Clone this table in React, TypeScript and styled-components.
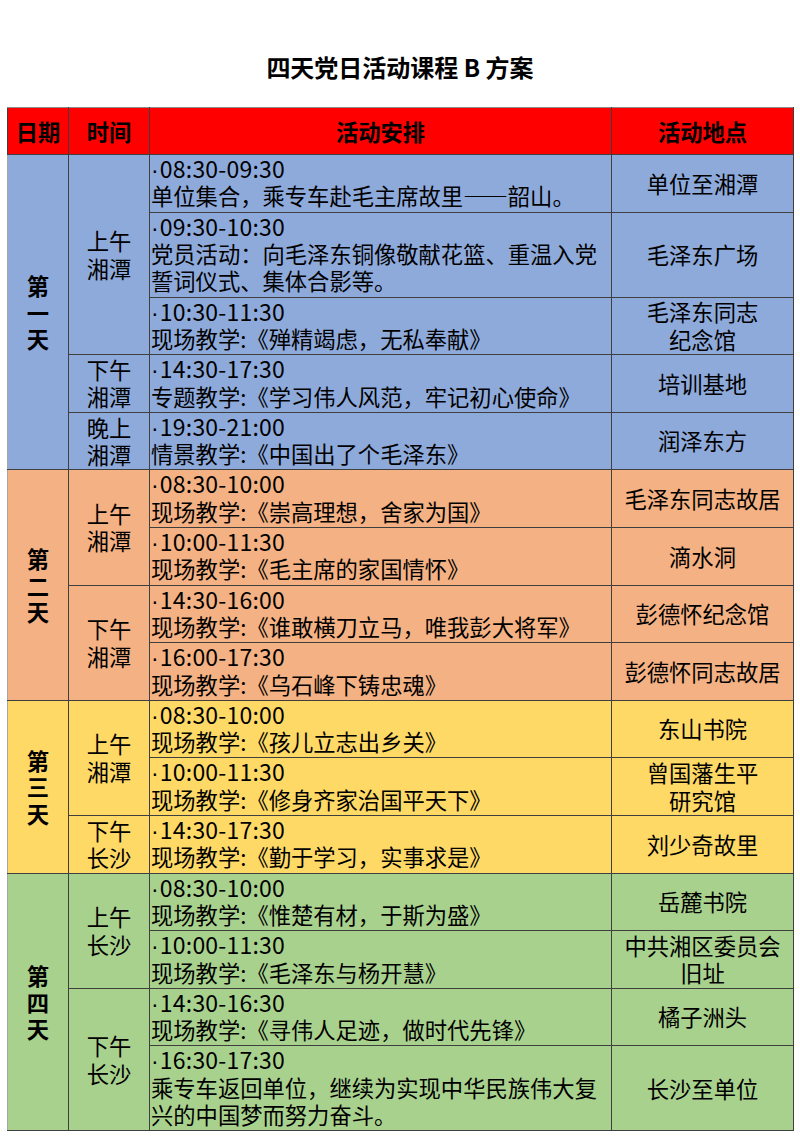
import React from 'react';
import styled, { createGlobalStyle } from 'styled-components';

const GlobalStyle = createGlobalStyle`
  body {
    margin: 0;
    background: #ffffff;
    font-family: "Noto Sans CJK SC", "Noto Sans", sans-serif;
    color: #000;
  }
`;

const Page = styled.div`
  width: 800px;
  padding: 0 7px;
  box-sizing: border-box;
`;

const Title = styled.h1`
  margin: 0 0 23px;
  padding-top: 50px;
  line-height: 34px;
  font-size: 24px;
  font-weight: 700;
  text-align: center;
`;

const Table = styled.table`
  width: 786px;
  table-layout: fixed;
  border-collapse: collapse;
  border-spacing: 0;
  font-size: 22.3px;
  border-left: 1px solid #a6a6a6;
  border-bottom: 1px solid #a6a6a6;
`;

const HeadRow = styled.tr`
  background-color: #ff0000;
  height: 47px;
`;

const HeadCell = styled.th`
  border: 1px solid #3f3f3f;
  border-top-color: #8c8c8c;
  font-weight: 700;
  text-align: center;
  padding: 0;
  line-height: 27px;
`;

const Row = styled.tr<{ $bg: string }>`
  background-color: ${(p) => p.$bg};
`;

const DayCell = styled.td`
  border: 1px solid #3f3f3f;
  border-left-color: #a6a6a6;
  font-weight: 700;
  text-align: center;
  vertical-align: middle;
  line-height: 26.5px;
  padding: 0;
`;

const TimeCell = styled.td`
  border: 1px solid #3f3f3f;
  text-align: center;
  vertical-align: middle;
  line-height: 27.4px;
  padding: 0;
`;

const ActivityCell = styled.td<{ $soft: boolean }>`
  border: 1px solid #3f3f3f;
  border-top-color: ${(p) => (p.$soft ? '#d6dbe6' : '#3f3f3f')};
  text-align: left;
  vertical-align: top;
  line-height: 27.4px;
  padding: 0 0 1.8px 1px;
  white-space: nowrap;
`;

const PlaceCell = styled.td<{ $soft: boolean }>`
  border: 1px solid #3f3f3f;
  border-top-color: ${(p) => (p.$soft ? '#d6dbe6' : '#3f3f3f')};
  text-align: center;
  vertical-align: middle;
  line-height: 27.4px;
  padding: 0;
  white-space: nowrap;
`;

const Line = styled.span`
  display: block;
`;

const TimeLine = styled.span`
  display: block;
  height: 27.4px;
  font-size: 23px;
  letter-spacing: 0.2px;
`;

const Dot = styled.span`
  font-family: "Liberation Sans", Arial, sans-serif;
  line-height: 1;
  margin-right: 1px;
`;

const Dash = styled.span`
  font-feature-settings: "fwid" 1;
`;

type Item = { time: string; lines: string[]; place: string[] };
type Slot = { label: string[]; items: Item[] };
type Day = { label: string[]; color: string; soft?: boolean; slots: Slot[] };

const days: Day[] = [
  {
    label: ['第', '一', '天'],
    color: '#8eaadb',
    soft: true,
    slots: [
      {
        label: ['上午', '湘潭'],
        items: [
          { time: '08:30-09:30', lines: ['单位集合，乘专车赴毛主席故里——韶山。'], place: ['单位至湘潭'] },
          {
            time: '09:30-10:30',
            lines: ['党员活动：向毛泽东铜像敬献花篮、重温入党', '誓词仪式、集体合影等。'],
            place: ['毛泽东广场'],
          },
          { time: '10:30-11:30', lines: ['现场教学:《殚精竭虑，无私奉献》'], place: ['毛泽东同志', '纪念馆'] },
        ],
      },
      {
        label: ['下午', '湘潭'],
        items: [{ time: '14:30-17:30', lines: ['专题教学:《学习伟人风范，牢记初心使命》'], place: ['培训基地'] }],
      },
      {
        label: ['晚上', '湘潭'],
        items: [{ time: '19:30-21:00', lines: ['情景教学:《中国出了个毛泽东》'], place: ['润泽东方'] }],
      },
    ],
  },
  {
    label: ['第', '二', '天'],
    color: '#f4b183',
    slots: [
      {
        label: ['上午', '湘潭'],
        items: [
          { time: '08:30-10:00', lines: ['现场教学:《崇高理想，舍家为国》'], place: ['毛泽东同志故居'] },
          { time: '10:00-11:30', lines: ['现场教学:《毛主席的家国情怀》'], place: ['滴水洞'] },
        ],
      },
      {
        label: ['下午', '湘潭'],
        items: [
          { time: '14:30-16:00', lines: ['现场教学:《谁敢横刀立马，唯我彭大将军》'], place: ['彭德怀纪念馆'] },
          { time: '16:00-17:30', lines: ['现场教学:《乌石峰下铸忠魂》'], place: ['彭德怀同志故居'] },
        ],
      },
    ],
  },
  {
    label: ['第', '三', '天'],
    color: '#ffd966',
    slots: [
      {
        label: ['上午', '湘潭'],
        items: [
          { time: '08:30-10:00', lines: ['现场教学:《孩儿立志出乡关》'], place: ['东山书院'] },
          { time: '10:00-11:30', lines: ['现场教学:《修身齐家治国平天下》'], place: ['曾国藩生平', '研究馆'] },
        ],
      },
      {
        label: ['下午', '长沙'],
        items: [{ time: '14:30-17:30', lines: ['现场教学:《勤于学习，实事求是》'], place: ['刘少奇故里'] }],
      },
    ],
  },
  {
    label: ['第', '四', '天'],
    color: '#a9d18e',
    slots: [
      {
        label: ['上午', '长沙'],
        items: [
          { time: '08:30-10:00', lines: ['现场教学:《惟楚有材，于斯为盛》'], place: ['岳麓书院'] },
          { time: '10:00-11:30', lines: ['现场教学:《毛泽东与杨开慧》'], place: ['中共湘区委员会', '旧址'] },
        ],
      },
      {
        label: ['下午', '长沙'],
        items: [
          { time: '14:30-16:30', lines: ['现场教学:《寻伟人足迹，做时代先锋》'], place: ['橘子洲头'] },
          {
            time: '16:30-17:30',
            lines: ['乘专车返回单位，继续为实现中华民族伟大复', '兴的中国梦而努力奋斗。'],
            place: ['长沙至单位'],
          },
        ],
      },
    ],
  },
];

// render "——" with full-width glyphs so it spans two character cells
function withDash(text: string) {
  const parts = text.split('——');
  return parts.map((p, i) => (
    <React.Fragment key={i}>
      {i > 0 && <Dash>——</Dash>}
      {p}
    </React.Fragment>
  ));
}

function Lines({ items }: { items: string[] }) {
  return (
    <>
      {items.map((t, i) => (
        <Line key={i}>{withDash(t)}</Line>
      ))}
    </>
  );
}

export default function App() {
  return (
    <Page>
      <GlobalStyle />
      <Title>四天党日活动课程 B 方案</Title>
      <Table>
        <colgroup>
          <col style={{ width: 61 }} />
          <col style={{ width: 81 }} />
          <col style={{ width: 462 }} />
          <col style={{ width: 182 }} />
        </colgroup>
        <thead>
          <HeadRow>
            <HeadCell>日期</HeadCell>
            <HeadCell>时间</HeadCell>
            <HeadCell>活动安排</HeadCell>
            <HeadCell>活动地点</HeadCell>
          </HeadRow>
        </thead>
        <tbody>
          {days.map((day) => {
            const dayCount = day.slots.reduce((sum, s) => sum + s.items.length, 0);
            return day.slots.map((slot, si) =>
              slot.items.map((item, ii) => {
                const soft = !!day.soft && ii > 0;
                return (
                  <Row key={day.label[1] + si + ii} $bg={day.color}>
                    {si === 0 && ii === 0 && (
                      <DayCell rowSpan={dayCount}>
                        <Lines items={day.label} />
                      </DayCell>
                    )}
                    {ii === 0 && (
                      <TimeCell rowSpan={slot.items.length}>
                        <Lines items={slot.label} />
                      </TimeCell>
                    )}
                    <ActivityCell $soft={soft}>
                      <TimeLine>
                        <Dot>·</Dot>
                        {item.time}
                      </TimeLine>
                      <Lines items={item.lines} />
                    </ActivityCell>
                    <PlaceCell $soft={soft}>
                      <Lines items={item.place} />
                    </PlaceCell>
                  </Row>
                );
              })
            );
          })}
        </tbody>
      </Table>
    </Page>
  );
}
